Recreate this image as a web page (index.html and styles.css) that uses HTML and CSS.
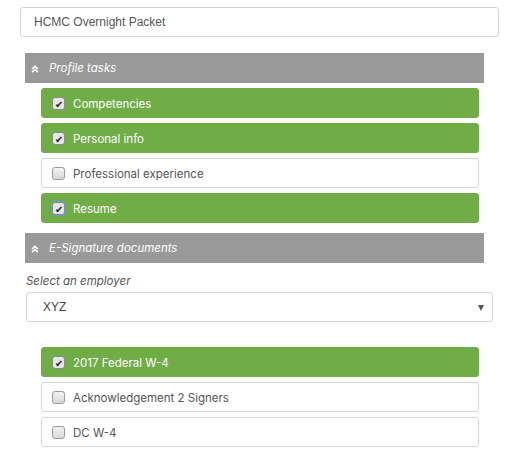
FILE: index.html
```html
<!DOCTYPE html>
<html lang="en">
<head>
  <meta charset="UTF-8" />
  <title>Packet</title>
  <link rel="stylesheet" href="styles.css">
</head>
<body>
  <div class="packet">
    <input class="packet-name" type="text" value="HCMC Overnight Packet">

    <div class="group">
      <div class="group-head">
        <svg class="chev" viewBox="0 0 8 8" width="8" height="8"><path d="M1 4 L4 1.4 L7 4 M1 7.2 L4 4.6 L7 7.2" fill="none" stroke="#fff" stroke-width="1.6"/></svg>
        <span>Profile tasks</span>
      </div>
      <ul class="tasks">
        <li class="task done"><span class="box">&#10004;</span>Competencies</li>
        <li class="task done"><span class="box">&#10004;</span>Personal info</li>
        <li class="task"><span class="box"></span>Professional experience</li>
        <li class="task done"><span class="box focus">&#10004;</span>Resume</li>
      </ul>
    </div>

    <div class="group esign">
      <div class="group-head">
        <svg class="chev" viewBox="0 0 8 8" width="8" height="8"><path d="M1 4 L4 1.4 L7 4 M1 7.2 L4 4.6 L7 7.2" fill="none" stroke="#fff" stroke-width="1.6"/></svg>
        <span>E-Signature documents</span>
      </div>
      <label class="pick-label">Select an employer</label>
      <div class="pick">XYZ<span class="caret"></span></div>
      <ul class="tasks docs">
        <li class="task done"><span class="box">&#10004;</span>2017 Federal W-4</li>
        <li class="task"><span class="box"></span>Acknowledgement 2 Signers</li>
        <li class="task"><span class="box"></span>DC W-4</li>
      </ul>
    </div>
  </div>
</body>
</html>
```

FILE: styles.css
```css
* {
  margin: 0;
  padding: 0;
  box-sizing: border-box;
}

body {
  background: #fff;
  font-family: "Inter", "Noto Sans", sans-serif;
  color: #555;
}

.packet {
  padding: 7px 0 0 20px;
  width: 499px;
}

.packet-name {
  display: block;
  width: 479px;
  height: 30px;
  border: 1px solid #d4d4d4;
  border-radius: 3px;
  padding: 0 13px;
  font-family: "Liberation Sans", Arial, sans-serif;
  font-size: 12px;
  color: #555;
  outline: none;
}

.group {
  margin-left: 5px;
  width: 459px;
}

.group-head {
  margin-top: 16px;
  height: 30px;
  background: #999999;
  color: #fff;
  font-style: italic;
  font-size: 11.5px;
  display: flex;
  align-items: center;
  padding-left: 6px;
  gap: 10px;
}

.esign .group-head {
  margin-top: 10px;
}

.chev {
  margin-top: 1px;
}

.tasks {
  list-style: none;
  padding-left: 16px;
  width: 454px;
}

.task {
  margin-top: 5px;
  height: 30px;
  border: 1px solid #d6d6d6;
  border-radius: 3px;
  display: flex;
  align-items: center;
  padding-left: 10px;
  padding-top: 1px;
  font-size: 11.5px;
  color: #555;
}

.task.done {
  background: #70ad47;
  border-color: #70ad47;
  color: #fff;
}

.box {
  width: 13px;
  height: 13px;
  border: 1px solid #9a9a9a;
  border-radius: 3px;
  background: linear-gradient(#f2f2f2, #d8d8d8);
  margin-right: 8px;
  display: flex;
  align-items: center;
  justify-content: center;
  font-size: 10px;
  line-height: 1;
  color: #222;
}

.task.done .box {
  background: #e6e6e6;
  border-color: #8a8a8a;
}

.box.focus {
  box-shadow: 0 0 0 1px #6d9ad6;
}

.pick-label {
  display: block;
  margin-top: 11px;
  font-size: 11.5px;
  font-style: italic;
  color: #555;
  padding-left: 1px;
  height: 18px;
}

.pick {
  position: relative;
  margin-left: 1px;
  width: 467px;
  height: 30px;
  border: 1px solid #d4d4d4;
  border-radius: 3px;
  display: flex;
  align-items: center;
  padding-left: 16px;
  font-family: "Liberation Sans", Arial, sans-serif;
  font-size: 12px;
  color: #444;
}

.caret {
  position: absolute;
  right: 8px;
  top: 12px;
  border-left: 3.5px solid transparent;
  border-right: 3.5px solid transparent;
  border-top: 6px solid #555;
}

.docs {
  margin-top: 25px;
}
```
